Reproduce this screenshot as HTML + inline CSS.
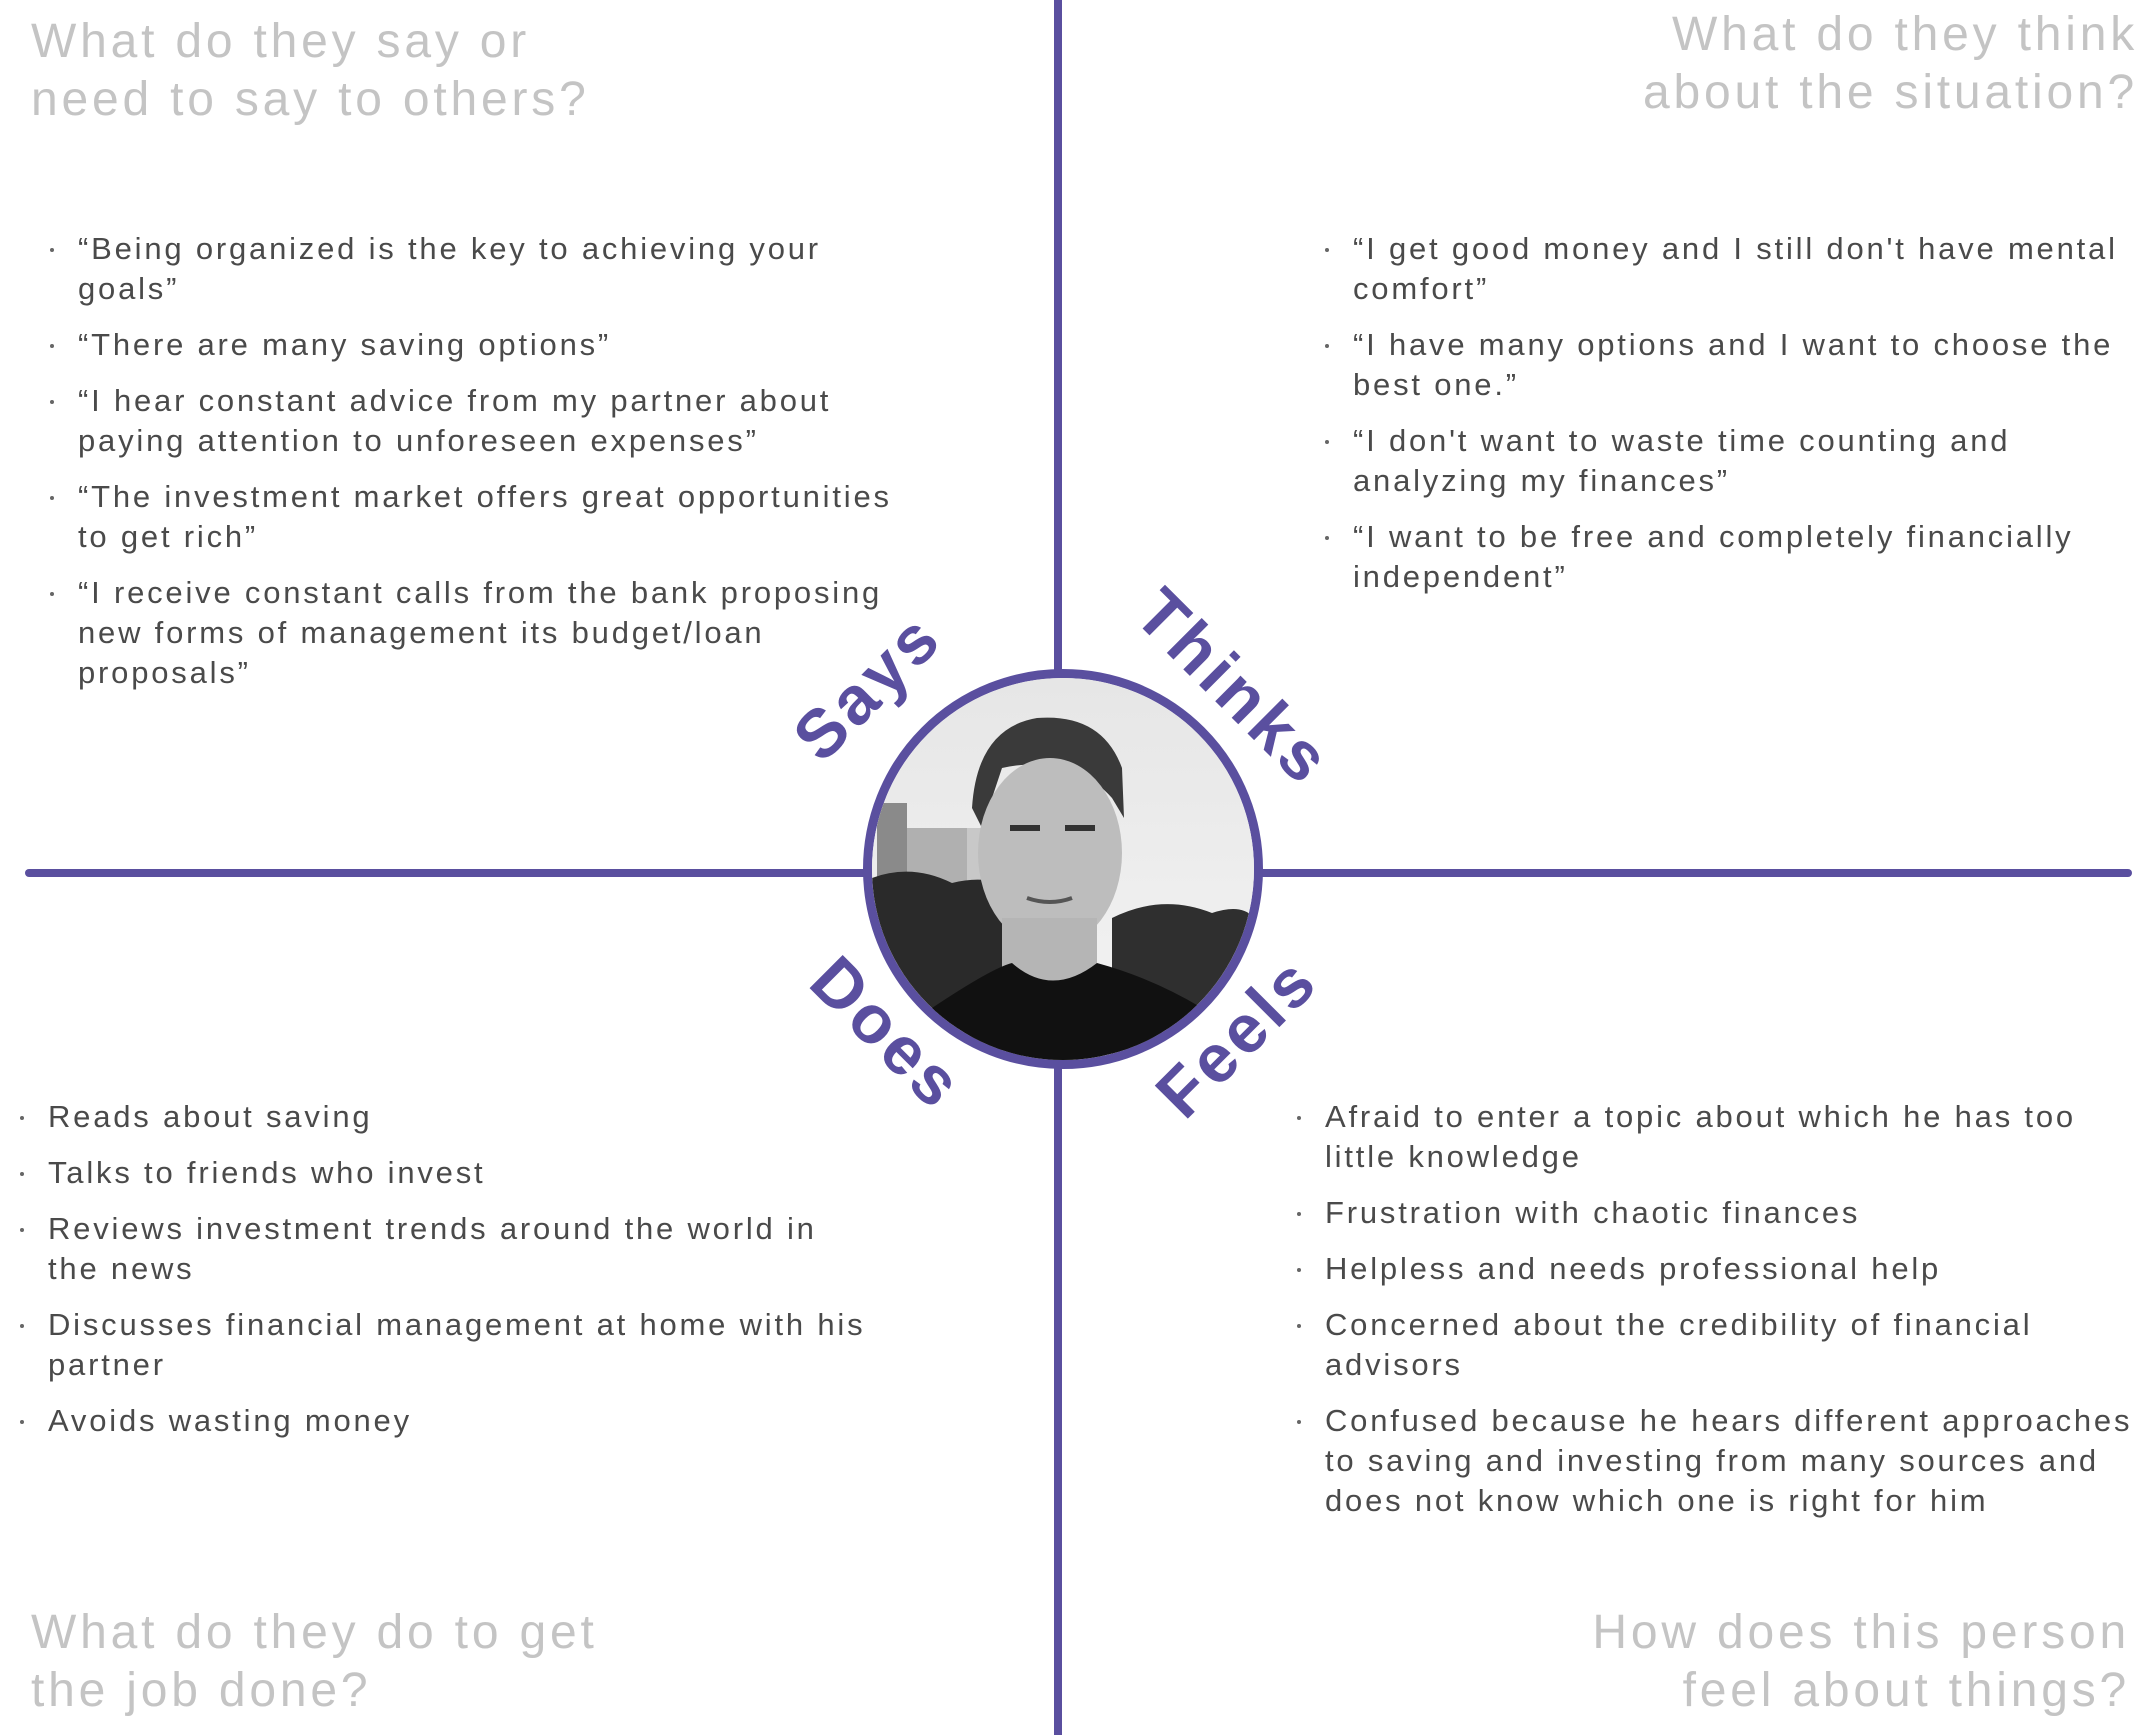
<!DOCTYPE html>
<html><head><meta charset="utf-8"><style>
html,body{margin:0;padding:0;background:#fff;}
body{width:2142px;height:1735px;position:relative;overflow:hidden;font-family:"Liberation Sans",sans-serif;}
.h{position:absolute;color:#c4c4c4;font-size:48px;line-height:58px;letter-spacing:3.8px;white-space:nowrap;}
.r{text-align:right;}
ul{position:absolute;margin:0;padding:0;list-style:none;color:#4a4a4a;font-size:31px;line-height:40px;letter-spacing:2.8px;white-space:nowrap;}
li{position:relative;padding-left:28px;margin-bottom:16px;}
li:before{content:"";position:absolute;left:0;top:19px;width:4px;height:4px;border-radius:50%;background:#666;}
.v{position:absolute;left:1054px;top:0;width:8px;height:1735px;background:#5a4f9f;}
.hz{position:absolute;left:25px;top:869px;width:2107px;height:8px;background:#5a4f9f;border-radius:4px;}
.lab{position:absolute;color:#5a4f9f;font-size:68px;font-weight:bold;letter-spacing:4px;white-space:nowrap;transform-origin:center;}
.circ{position:absolute;left:863px;top:669px;width:382px;height:382px;border:9px solid #5a4f9f;border-radius:50%;overflow:hidden;background:#fff;}
</style></head><body>
<div class="v"></div><div class="hz"></div>

<div class="h" style="left:31px;top:13px;">What do they say or<br>need to say to others?</div>
<div class="h r" style="right:4px;top:6px;">What do they think<br>about the situation?</div>
<div class="h" style="left:31px;top:1604px;">What do they do to get<br>the job done?</div>
<div class="h r" style="right:12px;top:1604px;">How does this person<br>feel about things?</div>

<ul style="left:50px;top:229px;">
<li>“Being organized is the key to achieving your<br>goals”</li>
<li>“There are many saving options”</li>
<li>“I hear constant advice from my partner about<br>paying attention to unforeseen expenses”</li>
<li>“The investment market offers great opportunities<br>to get rich”</li>
<li>“I receive constant calls from the bank proposing<br>new forms of management its budget/loan<br>proposals”</li>
</ul>
<ul style="left:1325px;top:229px;">
<li>“I get good money and I still don't have mental<br>comfort”</li>
<li>“I have many options and I want to choose the<br>best one.”</li>
<li>“I don't want to waste time counting and<br>analyzing my finances”</li>
<li>“I want to be free and completely financially<br>independent”</li>
</ul>
<ul style="left:20px;top:1097px;">
<li>Reads about saving</li>
<li>Talks to friends who invest</li>
<li>Reviews investment trends around the world in<br>the news</li>
<li>Discusses financial management at home with his<br>partner</li>
<li>Avoids wasting money</li>
</ul>
<ul style="left:1297px;top:1097px;">
<li>Afraid to enter a topic about which he has too<br>little knowledge</li>
<li>Frustration with chaotic finances</li>
<li>Helpless and needs professional help</li>
<li>Concerned about the credibility of financial<br>advisors</li>
<li>Confused because he hears different approaches<br>to saving and investing from many sources and<br>does not know which one is right for him</li>
</ul>

<div class="circ">
<svg width="382" height="382" viewBox="0 0 382 382">
<defs><linearGradient id="sky" x1="0" y1="0" x2="0" y2="1"><stop offset="0" stop-color="#e6e6e6"/><stop offset="1" stop-color="#f4f4f4"/></linearGradient></defs>
<rect width="382" height="382" fill="url(#sky)"/>
<rect x="5" y="125" width="30" height="100" fill="#8a8a8a"/>
<rect x="35" y="150" width="60" height="80" fill="#b0b0b0"/>
<rect x="95" y="150" width="40" height="80" fill="#c8c8c8"/>
<path d="M0 200 Q40 185 80 205 Q120 195 150 215 L150 382 L0 382Z" fill="#2a2a2a"/>
<path d="M240 240 Q290 215 340 235 Q370 225 382 240 L382 382 L240 382Z" fill="#2f2f2f"/>
<path d="M100 130 Q105 50 165 40 Q230 35 250 90 L252 140 L240 120 Q200 75 130 90 L110 150Z" fill="#3a3a3a"/>
<ellipse cx="178" cy="175" rx="72" ry="95" fill="#bdbdbd"/>
<rect x="130" y="240" width="95" height="70" fill="#b5b5b5"/>
<path d="M60 330 Q120 290 140 285 Q180 320 225 285 Q280 300 330 330 L382 382 L0 382Z" fill="#111"/>
<path d="M138 150 h30 M193 150 h30" stroke="#333" stroke-width="6"/>
<path d="M155 220 Q178 228 200 220" stroke="#555" stroke-width="4" fill="none"/>
</svg>
</div>

<div class="lab" style="left:780px;top:648px;transform:rotate(-45deg);">Says</div>
<div class="lab" style="left:1112px;top:648px;transform:rotate(45deg);">Thinks</div>
<div class="lab" style="left:796px;top:994px;transform:rotate(45deg);">Does</div>
<div class="lab" style="left:1140px;top:998px;transform:rotate(-45deg);">Feels</div>
</body></html>
